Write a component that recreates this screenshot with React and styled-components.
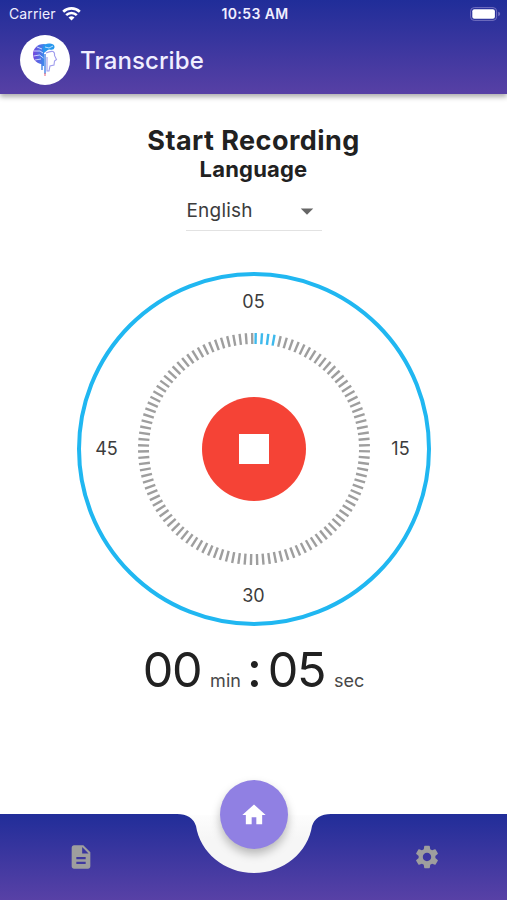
import React from 'react'
import styled, { createGlobalStyle } from 'styled-components'
import { MdArrowDropDown, MdDescription, MdHome, MdSettings } from 'react-icons/md'

const TICK_COUNT = 116
const TICK_STEP = 3.115
const TICK_START = 0.85
const ACTIVE_TICKS = 4

const App = () => (
  <Screen>
    <GlobalStyle />
    <Header>
      <StatusBar>
        <Carrier>
          Carrier
          <WifiIcon />
        </Carrier>
        <Clock>10:53 AM</Clock>
        <BatteryIcon />
      </StatusBar>
      <TitleBar>
        <Avatar>
          <LogoIcon />
        </Avatar>
        <AppTitle>Transcribe</AppTitle>
      </TitleBar>
    </Header>
    <Main>
      <Heading>Start Recording</Heading>
      <Label>Language</Label>
      <Select>
        English
        <MdArrowDropDown />
      </Select>
      <Dial>
        <DialNumber $area="top">05</DialNumber>
        <DialNumber $area="left">45</DialNumber>
        <Ring>
          <Ticks />
          <StopButton aria-label="Stop recording">
            <StopSquare />
          </StopButton>
        </Ring>
        <DialNumber $area="right">15</DialNumber>
        <DialNumber $area="bottom">30</DialNumber>
      </Dial>
      <Timer>
        <Digits>00</Digits>
        <Unit>min</Unit>
        <Colon>:</Colon>
        <Digits>05</Digits>
        <Unit>sec</Unit>
      </Timer>
    </Main>
    <NavBar>
      <NavShape />
      <NavItem aria-label="Documents">
        <MdDescription />
      </NavItem>
      <NavItem aria-label="Settings">
        <MdSettings />
      </NavItem>
      <HomeButton aria-label="Home">
        <MdHome />
      </HomeButton>
    </NavBar>
  </Screen>
)

const WifiIcon = () => (
  <svg width="19" height="14" viewBox="0 0 19 14" fill="none" stroke="#fff">
    <path d="M1.2 4.8a12 12 0 0 1 16.6 0" strokeWidth="2.7" />
    <path d="M4.2 8.1a7.6 7.6 0 0 1 10.6 0" strokeWidth="2.6" />
    <path d="M9.5 13.6 6.5 10.6a4.3 4.3 0 0 1 6 0z" fill="#fff" stroke="none" />
  </svg>
)

const BatteryIcon = () => (
  <svg width="31" height="14" viewBox="0 0 31 14">
    <rect x=".6" y=".6" width="26" height="12.8" rx="3.6" fill="none" stroke="#7370c0" />
    <rect x="2.3" y="2.3" width="22.6" height="9.4" rx="2" fill="#fff" />
    <path d="M28.2 4.8q2 .6 2 2.2t-2 2.2z" fill="#7370c0" />
  </svg>
)

const LogoIcon = () => (
  <svg width="26" height="36" viewBox="0 0 26 36" fill="none">
    <defs>
      <linearGradient id="logo" x1="0" y1="0" x2="1" y2="0">
        <stop offset="0" stopColor="#7545dc" />
        <stop offset="1" stopColor="#22a7f2" />
      </linearGradient>
    </defs>
    <path
      d="M12 2C5 2 1 7 1 12.5c0 5 3 8.5 8 9.5l1 2h2V11l5-4V3z"
      fill="url(#logo)"
    />
    <path d="M11 5q2-4 7-3.5 5 .5 4.5 4-.5 3-5 2-3.5-.5-6.5 3z" fill="#2698ee" />
    <path d="M2 9h6l3 2M1.5 14l6-1 4 3M3 18l6-1M13 5l4 1 4-2M5 5l5 2" stroke="#e6f1ff" strokeWidth=".8" />
    <path
      d="M14 11q4-2 7-1.5 2 1 1.5 4l2 4-2 1.5-.5 4-4 1-1 5h-2V15"
      stroke="#a09ded"
      strokeWidth="1.1"
    />
    <path d="M10 23v5M13 12v20" stroke="#528ce9" strokeWidth="1.5" />
    <path d="M13 31v3" stroke="#eb788c" strokeWidth="1.2" />
  </svg>
)

const Ticks = () => (
  <TicksSvg viewBox="-117 -117 234 234">
    {Array.from({ length: TICK_COUNT }, (_, i) => (
      <line
        key={i}
        y1="-116"
        y2="-105"
        strokeWidth="2.4"
        stroke={i < ACTIVE_TICKS ? '#3eb9ec' : '#9e9e9e'}
        transform={`rotate(${TICK_START + i * TICK_STEP})`}
      />
    ))}
  </TicksSvg>
)

const NavShape = () => (
  <NavSvg viewBox="0 0 507 86">
    <defs>
      <linearGradient id="nav" x1="0" y1="0" x2="0" y2="1">
        <stop offset="0" stopColor="#212d99" />
        <stop offset="1" stopColor="#5841a6" />
      </linearGradient>
      <linearGradient id="notch" x1="0" y1="0" x2="0" y2="1">
        <stop offset="0" stopColor="#fdfdfd" />
        <stop offset=".4" stopColor="#f6f6f6" />
      </linearGradient>
    </defs>
    <path d="M184 1h140v59H184z" fill="url(#notch)" />
    <path
      d="M0 0H177Q192 0 196 12C200 38 224 59 254 59S308 38 312 12Q316 0 331 0H507V86H0z"
      fill="url(#nav)"
    />
  </NavSvg>
)

const GlobalStyle = createGlobalStyle`
  body {
    margin: 0;
    background-color: #fff;
    font-family: Inter, sans-serif;
  }

  * {
    box-sizing: border-box;
  }

  button {
    padding: 0;
    border: none;
    cursor: pointer;
  }

  svg {
    display: block;
    flex: none;
  }
`

const Screen = styled.div`
  display: flex;
  flex-direction: column;
  width: 507px;
  height: 900px;
  overflow: hidden;
  color: #212121;
`

const Header = styled.header`
  height: 94px;
  flex: none;
  background: linear-gradient(#202d99, #5740a5);
  box-shadow: 0 3px 5px rgba(0, 0, 0, 0.32);
  color: #f0eeff;
`

const StatusBar = styled.div`
  display: grid;
  grid-template-columns: 1fr auto 1fr;
  align-items: center;
  height: 27px;
  padding: 0 6px 0 9px;

  > svg {
    justify-self: end;
  }
`

const Carrier = styled.div`
  display: flex;
  align-items: center;
  gap: 6px;
  font-size: 14px;
  letter-spacing: 0.1px;
`

const Clock = styled.div`
  font-size: 14px;
  font-weight: 600;
  letter-spacing: 0.4px;
`

const TitleBar = styled.div`
  display: flex;
  align-items: center;
  gap: 10px;
  padding: 8px 20px;
`

const Avatar = styled.div`
  display: flex;
  align-items: center;
  justify-content: center;
  width: 50px;
  height: 50px;
  border-radius: 50%;
  background-color: #fff;
`

const AppTitle = styled.h1`
  margin: 0;
  font-size: 24px;
  font-weight: 450;
  letter-spacing: 0.1px;
`

const Main = styled.main`
  display: flex;
  flex: 1;
  flex-direction: column;
  align-items: center;
  padding-top: 30px;
`

const Heading = styled.h2`
  margin: 0;
  font-size: 27px;
  font-weight: 650;
  letter-spacing: 0.45px;
  line-height: 33px;
`

const Label = styled.h3`
  margin: 0;
  font-size: 22px;
  font-weight: 650;
  letter-spacing: 0.2px;
  line-height: 25px;
`

const Select = styled.div`
  display: flex;
  align-items: center;
  justify-content: space-between;
  width: 136px;
  height: 40px;
  margin-top: 9px;
  padding-left: 1px;
  border-bottom: 1px solid #e2e2e2;
  color: #3c3c3c;
  font-size: 19px;
  letter-spacing: 0.2px;

  svg {
    width: 30px;
    height: 30px;
    color: #666;
  }
`

const Dial = styled.div`
  display: grid;
  grid-template: 'top top top' 52px 'left ring right' 1fr 'bottom bottom bottom' 52px / 52px 1fr 52px;
  place-items: center;
  width: 354px;
  height: 354px;
  margin-top: 41px;
  border: 4px solid #20b7f1;
  border-radius: 50%;
`

const DialNumber = styled.span`
  grid-area: ${({ $area }) => $area};
  color: #3c3c3c;
  font-size: 18px;
  line-height: 20px;
`

const Ring = styled.div`
  display: grid;
  grid-area: ring;
  place-items: center;

  > * {
    grid-area: 1 / 1;
  }
`

const TicksSvg = styled.svg`
  width: 234px;
  height: 234px;
`

const StopButton = styled.button`
  display: grid;
  place-items: center;
  width: 104px;
  height: 104px;
  border-radius: 50%;
  background-color: #f54336;
`

const StopSquare = styled.span`
  width: 30px;
  height: 30px;
  background-color: #fff;
`

const Timer = styled.div`
  display: flex;
  align-items: baseline;
  margin-top: 14px;
`

const Digits = styled.span`
  font-size: 48.5px;
  letter-spacing: -1.4px;
  line-height: 60px;
`

const Unit = styled.span`
  margin-left: 9px;
  color: #484848;
  font-size: 18px;
`

const Colon = styled.span`
  margin: 0 6px;
  font-size: 49px;
  font-weight: 500;
  line-height: 60px;
`

const NavBar = styled.nav`
  position: relative;
  display: flex;
  align-items: center;
  justify-content: space-between;
  flex: none;
  height: 86px;
  padding: 0 66px 0 67px;
`

const NavSvg = styled.svg`
  position: absolute;
  inset: 0;
  width: 507px;
  height: 86px;
`

const NavItem = styled.button`
  position: relative;
  background: none;
  color: #9e9e9e;

  svg {
    width: 28px;
    height: 28px;
  }
`

const HomeButton = styled.button`
  position: absolute;
  top: -34px;
  left: 220px;
  display: grid;
  place-items: center;
  width: 68px;
  height: 69px;
  border-radius: 50%;
  background-color: #9080e3;
  box-shadow: 0 5px 10px rgba(0, 0, 0, 0.26);
  color: #fff;

  svg {
    width: 28px;
    height: 28px;
  }
`

export default App
